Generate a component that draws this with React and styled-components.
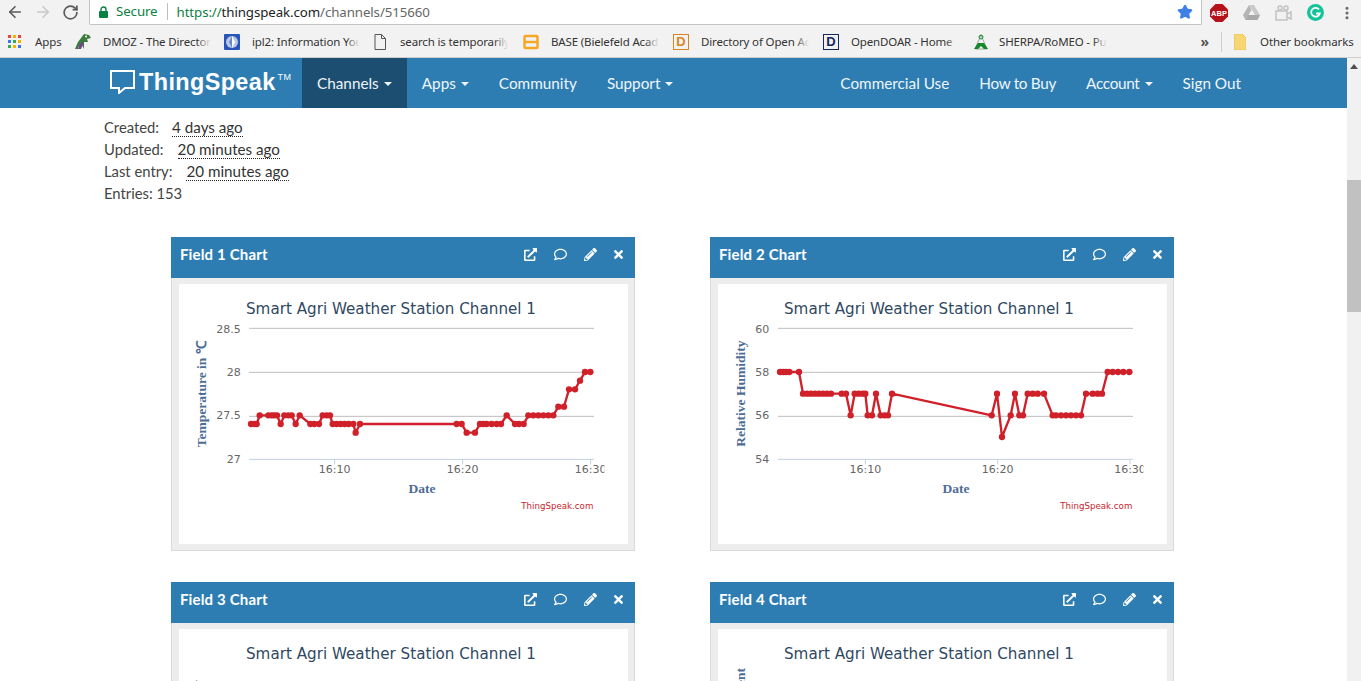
import React from 'react';
import styled, { createGlobalStyle } from 'styled-components';
import { ArrowLeft, ArrowRight, RotateCw, Star, MoreVertical } from 'lucide-react';
import { FaExternalLinkAlt, FaRegComment, FaPencilAlt, FaTimes } from 'react-icons/fa';

const Global = createGlobalStyle`
  html, body { margin: 0; padding: 0; height: 100%; overflow: hidden; background: #fff; }
  * { box-sizing: border-box; }
`;
const Page = styled.div`
  width: 1361px; height: 681px; overflow: hidden; display: flex; flex-direction: column;
  font-family: "Lato", "Liberation Sans", sans-serif;
`;
const Toolbar = styled.div`
  height: 25px; flex: none; background: #f2f2f2; display: flex; align-items: center;
`;
const NavButtons = styled.div`
  width: 89px; flex: none; display: flex; align-items: center; gap: 10px; padding-left: 6px; padding-bottom: 1px;
`;
const Omnibox = styled.div`
  width: 1113px; height: 25px; flex: none; background: #fff; border: 1px solid #c4c4c4; border-top: none;
  border-radius: 0 0 2px 2px; display: flex; align-items: center; padding: 0 8px 1px 9px;
  font: 13.3px "Noto Sans", sans-serif; letter-spacing: -0.1px;
`;
const Secure = styled.span`
  color: #0b8043; margin-left: 8px; padding-right: 9px; margin-right: 9px; border-right: 1px solid #bdbdbd; line-height: 17px;
`;
const UrlDim = styled.span` color: ${p => p.$c || '#0b8043'}; `;
const StarWrap = styled.span` margin-left: auto; display: flex; `;
const Extensions = styled.div`
  flex: 1; display: flex; align-items: center; padding-left: 8px; gap: 15px;
`;
const Bookmarks = styled.div`
  height: 33px; flex: none; background: #f2f2f2; border-bottom: 1px solid #cfcfcf; display: flex; align-items: center;
  padding: 1px 0 0 8px; font: 11.5px "Noto Sans", sans-serif; color: #333;
`;
const Mark = styled.div`
  width: ${p => p.$w || 150}px; flex: none; display: flex; align-items: center; gap: ${p => p.$gap || 12}px;
`;
const MarkText = styled.span`
  width: ${p => p.$w || 108}px; flex: none; white-space: nowrap; overflow: hidden; position: relative; letter-spacing: -0.15px;
  &::after { content: ''; position: absolute; right: 0; top: 0; bottom: 0; width: 14px; background: linear-gradient(90deg, rgba(242,242,242,0), #f2f2f2); }
`;
const PlainText = styled.span` white-space: nowrap; letter-spacing: -0.1px; `;
const Chevrons = styled.span` margin-left: auto; color: #555; font-size: 14px; font-weight: 700; `;
const Sep = styled.span` width: 1px; height: 20px; background: #cfcfcf; margin: 0 12px 0 12px; `;

const Body = styled.div` flex: 1; display: flex; min-height: 0; `;
const Main = styled.div` flex: 1; min-width: 0; overflow: hidden; `;
const Scrollbar = styled.div`
  width: 14px; flex: none; background: #f1f1f1; position: relative;
  &::before { content: ''; position: absolute; top: 6px; left: 3px; border: 4px solid transparent; border-top: none; border-bottom: 5px solid #505050; }
`;
const Thumb = styled.div` position: absolute; top: 122px; left: 0; width: 14px; height: 132px; background: #c1c1c1; `;

const Nav = styled.nav`
  height: 50px; background: #2d7db3; display: flex; align-items: stretch; padding-left: 110px; padding-right: 91px; color: #fff;
  font-size: 15.3px;
`;
const Logo = styled.div`
  width: 192px; flex: none; display: flex; align-items: center; gap: 4px; padding-bottom: 2px;
  font: 700 23.4px "Liberation Sans", sans-serif; color: #fff; letter-spacing: 0.4px;
`;
const Tm = styled.sup` font-size: 9px; font-weight: 400; align-self: flex-start; margin: 14px 0 0 -2px; `;
const NavItem = styled.a`
  display: flex; align-items: center; padding: 0 15px 1px; color: #eef5fa; white-space: nowrap;
  letter-spacing: ${p => p.$tight ? '-0.3px' : 'normal'};
  background: ${p => p.$active ? '#1c4e71' : 'transparent'};
`;
const Caret = styled.span`
  display: inline-block; margin-left: 5px; margin-top: 3px; border: 4px solid transparent; border-bottom: none; border-top-color: currentColor;
`;
const Spacer = styled.div` flex: 1; `;

const Info = styled.div`
  padding: 8px 0 0 104px; font-size: 14.8px; line-height: 22px; color: #444;
`;
const InfoRow = styled.div` display: flex; `;
const Ago = styled.abbr`
  margin-left: ${p => p.$ml}px; font-size: 15.2px; color: #333; text-decoration: none; border-bottom: 1px dotted #222; line-height: 17px; height: 18px; margin-top: 3px;
`;
const Grid = styled.div`
  display: grid; grid-template-columns: 464px 464px; column-gap: 75px; row-gap: 31px; padding: 33px 0 0 171px;
`;
const Panel = styled.div`
  height: 314px; background: #ededed; border: 1px solid #d9d9d9; border-top: none; display: flex; flex-direction: column;
`;
const PanelHead = styled.div`
  height: 41px; flex: none; margin: 0 -1px; background: #2d7db3; color: #fff; display: flex; align-items: center; padding: 0 10px 7px 9px;
  font-weight: 700; font-size: 15px; letter-spacing: 0.15px;
`;
const Icons = styled.div`
  margin-left: auto; display: flex; align-items: center; gap: 17px; font-size: 13px;
  svg:last-child { margin-left: -2px; }
`;
const ChartBox = styled.div`
  height: 260px; margin: 6px 6px 0 7px; background: #fff; flex: none;
`;

const lvl = (y, xs) => xs.map(x => [x, y]);
const chart1 = [
  ...lvl(582, [258, 268, 275]), ...lvl(556, [284, 310, 320, 328, 336]), [347, 582], ...lvl(556, [358, 370, 380]), [392, 582], [404, 556],
  ...lvl(582, [436, 448, 462]), ...lvl(556, [473, 485, 495]), ...lvl(582, [503, 515, 527, 539, 551, 565]), [572, 608], [585, 582],
  ...lvl(582, [875, 890]), ...lvl(608, [905, 930]), ...lvl(582, [945, 955, 965, 980, 995, 1008]), [1025, 556],
  ...lvl(582, [1050, 1062, 1076]), ...lvl(556, [1090, 1105, 1120, 1135, 1150, 1165]), ...lvl(530, [1180, 1197]),
  ...lvl(478, [1212, 1230]), [1245, 452], ...lvl(426, [1260, 1276]),
];
const chart2 = [
  ...lvl(426, [222, 232, 240, 250, 279]), ...lvl(491, [291, 303, 315, 327, 339, 351, 363, 375, 407, 420]), [434, 556],
  ...lvl(491, [446, 458, 470, 478]), ...lvl(556, [485, 498]), [510, 491], ...lvl(556, [524, 536, 546]), [558, 491],
  [857, 556], [873, 491], [888, 621], [914, 556], [927, 491], ...lvl(556, [940, 951]), ...lvl(491, [965, 980, 995, 1014]),
  ...lvl(556, [1040, 1050, 1065, 1080, 1095, 1110, 1125]), ...lvl(491, [1140, 1160, 1175, 1188]), ...lvl(426, [1205, 1220, 1236, 1252, 1270]),
];

const ChartTitle = styled.text` font: 49px "DejaVu Sans", sans-serif; fill: #2f4863; `;
const AxisName = styled.text` font: 700 40.5px "Liberation Serif", serif; fill: #4d6d94; `;
const Tick = styled.text` font: 33px "DejaVu Sans", sans-serif; fill: #666; `;
const Credit = styled.text` font: 26px "DejaVu Sans", sans-serif; fill: #c8242b; `;

function Chart({ vx, left, right, ticks, ylabels, ylabX, axisX, label, labelY, points, titleX, dateX, creditX, clipX }) {
  const id = `clip${vx}${label.length}`;
  return (
    <svg width="450" height="260" viewBox={`${vx} 162 1350 780`} style={{ display: 'block' }}>
      <ChartTitle x={titleX} y={252} textLength="870" lengthAdjust="spacingAndGlyphs">Smart Agri Weather Station Channel 1</ChartTitle>
      {[295, 427, 559].map(y => <line key={y} x1={left} x2={right} y1={y} y2={y} stroke="#bdbdbd" strokeWidth="3" />)}
      <line x1={left} x2={right} y1={688} y2={688} stroke="#c0d0e0" strokeWidth="3" />
      {ticks.map(t => <line key={t} x1={t} x2={t} y1={688} y2={703} stroke="#c0d0e0" strokeWidth="3" />)}
      {ylabels.map((l, i) => <Tick key={l} x={ylabX} y={[308, 438, 567, 698][i]} textAnchor="end">{l}</Tick>)}
      <clipPath id={id}><rect x={vx} y={162} width={clipX - vx} height={780} /></clipPath>
      <g clipPath={`url(#${id})`}>
        {ticks.map((t, i) => <Tick key={t} x={t} y={729} textAnchor="middle">{['16:10', '16:20', '16:30'][i]}</Tick>)}
      </g>
      <AxisName transform={`rotate(-90 ${axisX} ${labelY})`} x={axisX} y={labelY}>{label}</AxisName>
      <AxisName x={dateX} y={788} textAnchor="middle">Date</AxisName>
      <Credit x={creditX} y={837} textAnchor="end">ThingSpeak.com</Credit>
      <polyline points={points.map(p => p.join(',')).join(' ')} fill="none" stroke="#d0202a" strokeWidth="7" />
      {points.map((p, i) => <circle key={i} cx={p[0]} cy={p[1]} r="9.5" fill="#d0202a" />)}
    </svg>
  );
}

function TitleOnly({ vx, titleX, label, axisX, labelY }) {
  return (
    <svg width="450" height="260" viewBox={`${vx} 162 1350 780`} style={{ display: 'block' }}>
      <ChartTitle x={titleX} y={252} textLength="870" lengthAdjust="spacingAndGlyphs">Smart Agri Weather Station Channel 1</ChartTitle>
      <AxisName transform={`rotate(-90 ${axisX} ${labelY})`} x={axisX} y={labelY} textAnchor="end">{label}</AxisName>
    </svg>
  );
}

function ChartPanel({ title, children }) {
  return (
    <Panel>
      <PanelHead>
        {title}
        <Icons><FaExternalLinkAlt /><FaRegComment /><FaPencilAlt /><FaTimes /></Icons>
      </PanelHead>
      <ChartBox>{children}</ChartBox>
    </Panel>
  );
}

const AppsIcon = () => (
  <svg width="13" height="13" viewBox="0 0 13 13">
    {[0, 5, 10].flatMap(y => [0, 5, 10].map((x, i) => (
      <rect key={`${x}${y}`} x={x} y={y} width="3" height="3" fill={[['#e8453c', '#f4b400', '#e8453c'], ['#3b78e7', '#34a853', '#f4b400'], ['#34a853', '#f4b400', '#3b78e7']][y / 5][i]} />
    )))}
  </svg>
);
const Dino = () => (
  <svg width="17" height="17" viewBox="0 0 17 17">
    <path d="M1 16 4 9 7 5 10 1 15 2 17 5 13 6 14 9 10 9 10 16 8 12 5 13 4 16Z" fill="#3d7a3f" />
    <path d="M10 9 7 16 4 16 6 11Z" fill="#7a3f8f" />
    <circle cx="12" cy="3.5" r="1" fill="#fff" />
  </svg>
);
const Ipl = () => (
  <svg width="16" height="16" viewBox="0 0 16 16">
    <rect width="16" height="16" rx="1" fill="#2a55b8" />
    <circle cx="8" cy="8" r="6" fill="#b9c8e8" />
    <path d="M8 2 11 8 8 14Z" fill="#fff" /><path d="M8 2 5 8 8 14Z" fill="#6a88c8" />
  </svg>
);
const DocIcon = () => (
  <svg width="12" height="16" viewBox="0 0 12 16" fill="none" stroke="#555">
    <path d="M1 .5h6.5l4 4v11H1Z" /><path d="M7.5.5v4h4" />
  </svg>
);
const BaseIcon = () => (
  <svg width="16" height="16" viewBox="0 0 16 16" fill="none" stroke="#f5a623" strokeWidth="2.4">
    <rect x="1.5" y="2" width="13" height="12" rx="1" /><path d="M1.5 8h13" />
  </svg>
);
const LetterBox = styled.span`
  width: 16px; height: 16px; flex: none; border: 1px solid ${p => p.$c}; color: ${p => p.$c};
  font: 700 13px "Liberation Sans", sans-serif; display: flex; align-items: center; justify-content: center;
`;
const Sherpa = () => (
  <svg width="16" height="17" viewBox="0 0 16 17" fill="none">
    <path d="M8 2 2 16 14 16Z" stroke="#9aa89a" strokeWidth="1" />
    <path d="M1 16 5 10H11L15 16H11L8 13 5 16Z" fill="#158a2c" />
    <circle cx="8" cy="4" r="2" stroke="#158a2c" />
  </svg>
);
const Folder = () => (
  <svg width="12" height="16" viewBox="0 0 12 16"><path d="M0 0H8L12 4V16H0Z" fill="#f7d774" stroke="#e8c25a" /></svg>
);
const Lock = () => (
  <svg width="9" height="12" viewBox="0 0 9 12">
    <rect y="5" width="9" height="7" rx="1" fill="#0b8043" />
    <path d="M2 5V3.5a2.5 2.5 0 0 1 5 0V5" fill="none" stroke="#0b8043" strokeWidth="1.4" />
  </svg>
);
const Abp = () => (
  <svg width="18" height="18" viewBox="0 0 18 18">
    <path d="M5.5 0h7L18 5.5v7L12.5 18h-7L0 12.5v-7Z" fill="#b5121b" />
    <text x="9" y="12" textAnchor="middle" fontSize="7.5" fontWeight="700" fill="#fff" fontFamily="Liberation Sans">ABP</text>
  </svg>
);
const Drive = () => (
  <svg width="17" height="15" viewBox="0 0 17 15">
    <path d="M6 0h5l6 10h-5Z" fill="#c9c9c9" /><path d="M6 0 0 10l2.5 5 6-10Z" fill="#b5b5b5" /><path d="M5 10h12l-2.5 5h-12Z" fill="#a9a9a9" />
  </svg>
);
const Film = () => (
  <svg width="17" height="16" viewBox="0 0 17 16" fill="none" stroke="#c2c2c2" strokeWidth="1.5">
    <circle cx="5" cy="3" r="2" /><circle cx="11" cy="3" r="2" /><rect x="1" y="6" width="11" height="9" /><path d="M12 9l4-2v7l-4-2" />
  </svg>
);
const Gram = () => (
  <svg width="17" height="17" viewBox="0 0 17 17">
    <circle cx="8.5" cy="8.5" r="8.5" fill="#15c39a" />
    <path d="M12 5.5A4.4 4.4 0 1 0 12.8 9.5H9" fill="none" stroke="#fff" strokeWidth="1.8" />
  </svg>
);

export default function App() {
  return (
    <Page>
      <Global />
      <Toolbar>
        <NavButtons>
          <ArrowLeft size={18} color="#5a5a5a" strokeWidth={2.2} />
          <ArrowRight size={18} color="#c8c8c8" strokeWidth={2.2} />
          <RotateCw size={17} color="#5a5a5a" strokeWidth={2.4} />
        </NavButtons>
        <Omnibox>
          <Lock />
          <Secure>Secure</Secure>
          <UrlDim>https://</UrlDim><UrlDim $c="#222">thingspeak.com</UrlDim><UrlDim $c="#666">/channels/515660</UrlDim>
          <StarWrap><Star size={16} color="#3f7fe8" fill="#3f7fe8" /></StarWrap>
        </Omnibox>
        <Extensions>
          <Abp /><Drive /><Film /><Gram />
          <MoreVertical size={16} color="#666" strokeWidth={2.6} />
        </Extensions>
      </Toolbar>
      <Bookmarks>
        <Mark $w={66} $gap={14}><AppsIcon /><PlainText>Apps</PlainText></Mark>
        <Mark><Dino /><MarkText>DMOZ - The Directory</MarkText></Mark>
        <Mark><Ipl /><MarkText>ipl2: Information You</MarkText></Mark>
        <Mark $w={149} $gap={14}><DocIcon /><MarkText>search is temporarily</MarkText></Mark>
        <Mark><BaseIcon /><MarkText>BASE (Bielefeld Acad</MarkText></Mark>
        <Mark><LetterBox $c="#d9861c">D</LetterBox><MarkText>Directory of Open Ac</MarkText></Mark>
        <Mark><LetterBox $c="#14275e">D</LetterBox><MarkText>OpenDOAR - Home</MarkText></Mark>
        <Mark $w={137} $gap={10}><Sherpa /><MarkText>SHERPA/RoMEO - Pu</MarkText></Mark>
        <Chevrons>»</Chevrons>
        <Sep />
        <Mark $w={127} $gap={14}><Folder /><PlainText>Other bookmarks</PlainText></Mark>
      </Bookmarks>
      <Body>
        <Main>
          <Nav>
            <Logo>
              <svg width="25" height="24" viewBox="0 0 25 24" fill="none" stroke="#fff" strokeWidth="2">
                <path d="M1 1h23v17H15l-6 5v-5H1Z" />
              </svg>
              ThingSpeak<Tm>TM</Tm>
            </Logo>
            <NavItem $active>Channels<Caret /></NavItem>
            <NavItem>Apps<Caret /></NavItem>
            <NavItem>Community</NavItem>
            <NavItem>Support<Caret /></NavItem>
            <Spacer />
            <NavItem>Commercial Use</NavItem>
            <NavItem $tight>How to Buy</NavItem>
            <NavItem $tight>Account<Caret /></NavItem>
            <NavItem>Sign Out</NavItem>
          </Nav>
          <Info>
            <InfoRow>Created:<Ago $ml={13}>4 days ago</Ago></InfoRow>
            <InfoRow>Updated:<Ago $ml={14}>20 minutes ago</Ago></InfoRow>
            <InfoRow>Last entry:<Ago $ml={14}>20 minutes ago</Ago></InfoRow>
            <InfoRow>Entries: 153</InfoRow>
          </Info>
          <Grid>
            <ChartPanel title="Field 1 Chart">
              <Chart vx={42} left={252} right={1287} ticks={[509, 893, 1277]} ylabels={['28.5', '28', '27.5', '27']} ylabX={227}
                axisX={124} label="Temperature in ℃" labelY={652} points={chart1} titleX={243} dateX={771} creditX={1285} clipX={1318} />
            </ChartPanel>
            <ChartPanel title="Field 2 Chart">
              <Chart vx={36} left={216} right={1281} ticks={[478, 875, 1272]} ylabels={['60', '58', '56', '54']} ylabX={190}
                axisX={118} label="Relative Humidity" labelY={650} points={chart2} titleX={234} dateX={750} creditX={1279} clipX={1312} />
            </ChartPanel>
            <ChartPanel title="Field 3 Chart">
              <TitleOnly vx={42} titleX={243} label="Humidity" axisX={112} labelY={315} />
            </ChartPanel>
            <ChartPanel title="Field 4 Chart">
              <TitleOnly vx={36} titleX={234} label="Measurement" axisX={118} labelY={279} />
            </ChartPanel>
          </Grid>
        </Main>
        <Scrollbar><Thumb /></Scrollbar>
      </Body>
    </Page>
  );
}
